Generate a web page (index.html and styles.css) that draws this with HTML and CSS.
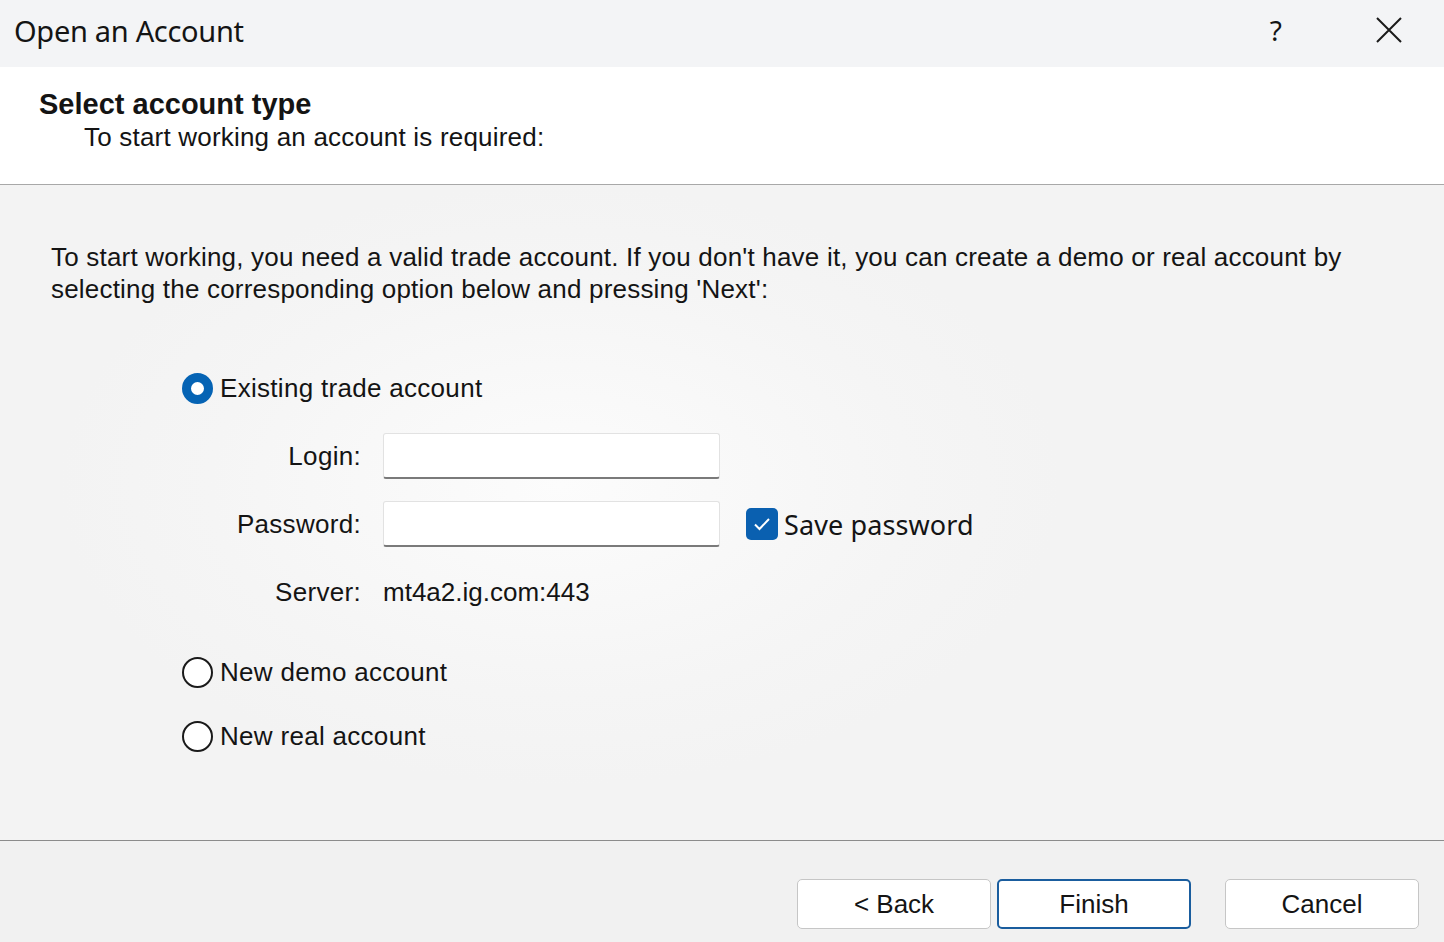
FILE: index.html
```html
<!DOCTYPE html>
<html lang="en">
<head>
    <meta charset="UTF-8">
    <title>Open an Account</title>
    <link rel="stylesheet" href="styles.css">
</head>
<body>
    <div class="dialog">
        <div class="titlebar">
            <span class="title">Open an Account</span>
            <div class="title-buttons">
                <span class="help">?</span>
                <svg class="close" width="26" height="26" viewBox="0 0 26 26">
                    <path d="M1 1 L25 25 M25 1 L1 25" stroke="#1a1a1a" stroke-width="2" fill="none"/>
                </svg>
            </div>
        </div>

        <div class="header">
            <div class="header-title">Select account type</div>
            <div class="header-sub">To start working an account is required:</div>
        </div>

        <div class="main">
            <p class="intro">To start working, you need a valid trade account. If you don't have it, you can create a demo or real account by selecting the corresponding option below and pressing 'Next':</p>

            <div class="options">
                <label class="radio-row">
                    <span class="radio checked"></span>
                    <span>Existing trade account</span>
                </label>

                <div class="fields">
                    <span class="field-label">Login:</span>
                    <span class="input"></span>
                    <span></span>

                    <span class="field-label">Password:</span>
                    <span class="input"></span>
                    <label class="check-row">
                        <span class="checkbox">
                            <svg width="18" height="14" viewBox="0 0 18 14">
                                <path d="M2 7.5 L6.5 12 L16 2" stroke="#fff" stroke-width="2" fill="none"/>
                            </svg>
                        </span>
                        <span>Save password</span>
                    </label>

                    <span class="field-label">Server:</span>
                    <span class="server">mt4a2.ig.com:443</span>
                    <span></span>
                </div>

                <label class="radio-row demo">
                    <span class="radio"></span>
                    <span>New demo account</span>
                </label>
                <label class="radio-row real">
                    <span class="radio"></span>
                    <span>New real account</span>
                </label>
            </div>
        </div>

        <div class="footer">
            <button class="btn">&lt; Back</button>
            <button class="btn primary">Finish</button>
            <button class="btn cancel">Cancel</button>
        </div>
    </div>
</body>
</html>
```

FILE: styles.css
```css
body {
    margin: 0;
    padding: 0;
    background: #f4f4f4;
    color: #141414;
    font-family: 'Liberation Sans', Arial, sans-serif;
    overflow: hidden;
}

.dialog {
    width: 1444px;
    height: 942px;
    display: flex;
    flex-direction: column;
}

/* window caption */
.titlebar {
    height: 67px;
    box-sizing: border-box;
    padding-left: 14px;
    background: #f3f4f6;
    display: flex;
    justify-content: space-between;
    align-items: flex-start;
}

.title {
    font-family: 'Noto Sans', sans-serif;
    font-size: 29px;
    letter-spacing: -0.3px;
    line-height: 40px;
    margin-top: 11px;
}

.title-buttons {
    display: flex;
    align-items: center;
    height: 60px;
}

.help {
    font-family: 'Noto Sans', sans-serif;
    font-size: 28px;
    margin-right: 94px;
}

.close {
    margin-right: 42px;
}

/* white header panel */
.header {
    height: 118px;
    box-sizing: border-box;
    padding-top: 20px;
    background: #fff;
    border-bottom: 1px solid #a8a8a8;
}

.header-title {
    font-weight: bold;
    font-size: 29px;
    line-height: 34px;
    padding-left: 39px;
}

.header-sub {
    font-size: 26px;
    line-height: 32px;
    padding-left: 84px;
    letter-spacing: 0.2px;
}

/* page body */
.main {
    height: 655px;
    box-sizing: border-box;
    padding-top: 56px;
    background: radial-gradient(ellipse 500px 300px at 560px 300px, #fcfcfc, #f5f5f5 70%, #f3f3f3);
}

.intro {
    margin: 0 0 0 51px;
    width: 1340px;
    font-size: 26px;
    line-height: 32px;
    letter-spacing: 0.2px;
}

.options {
    margin-left: 182px;
    margin-top: 67px;
    font-size: 26px;
    letter-spacing: 0.3px;
}

.radio-row {
    display: flex;
    align-items: center;
    height: 32px;
    gap: 7px;
}

.radio-row.demo {
    margin-top: 41px;
}

.radio-row.real {
    margin-top: 32px;
}

.radio {
    width: 31px;
    height: 31px;
    box-sizing: border-box;
    border-radius: 50%;
    border: 2px solid #1a1a1a;
    background: #fff;
}

.radio.checked {
    border: 9px solid #0563b4;
    background: #fff;
}

.fields {
    display: grid;
    grid-template-columns: 179px 337px auto;
    grid-auto-rows: 46px;
    column-gap: 22px;
    row-gap: 22px;
    margin-top: 29px;
    align-items: center;
}

.field-label {
    text-align: right;
}

.input {
    height: 46px;
    box-sizing: border-box;
    background: #fff;
    border: 1px solid #e2e2e2;
    border-bottom: 2px solid #7a7a7a;
    border-radius: 3px;
}

.server {
    letter-spacing: 0;
}

.check-row {
    display: flex;
    align-items: center;
    gap: 6px;
    margin-left: 4px;
    font-family: 'Noto Sans', sans-serif;
    font-size: 27px;
    letter-spacing: 0.1px;
}

.checkbox {
    width: 32px;
    height: 32px;
    border-radius: 5px;
    background: #0a60b0;
    display: flex;
    align-items: center;
    justify-content: center;
}

/* button strip */
.footer {
    flex: 1;
    border-top: 1px solid #8c8c8c;
    background: #f1f1f1;
    display: flex;
    justify-content: flex-end;
    align-items: flex-start;
    padding: 38px 25px 0 0;
}

.btn {
    width: 194px;
    height: 50px;
    background: #fff;
    border: 1px solid #c6c6c6;
    border-radius: 5px;
    font-family: 'Liberation Sans', Arial, sans-serif;
    font-size: 26px;
    color: #141414;
    padding: 0;
    margin-left: 6px;
}

.btn.primary {
    border: 2px solid #1a5d9e;
}

.btn.cancel {
    margin-left: 34px;
}
```
